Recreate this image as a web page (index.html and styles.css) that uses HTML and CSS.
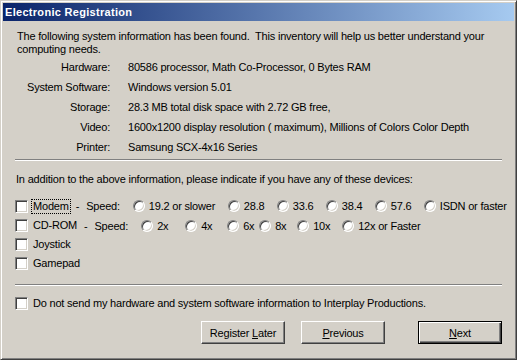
FILE: index.html
```html
<!DOCTYPE html>
<html lang="en">
<head>
  <meta charset="UTF-8">
  <title>Electronic Registration</title>
  <link rel="stylesheet" href="styles.css">
</head>
<body>
  <div class="window">
    <div class="titlebar">Electronic Registration</div>

    <div class="content">
      <p class="intro">The following system information has been found.&nbsp; This inventory will help us better understand your<br>computing needs.</p>

      <div class="info">
        <div class="info-row"><span class="info-label">Hardware:</span><span>80586 processor, Math Co-Processor, 0 Bytes RAM</span></div>
        <div class="info-row"><span class="info-label">System Software:</span><span>Windows version 5.01</span></div>
        <div class="info-row"><span class="info-label">Storage:</span><span>28.3 MB total disk space with 2.72 GB free,</span></div>
        <div class="info-row"><span class="info-label">Video:</span><span>1600x1200 display resolution ( maximum), Millions of Colors Color Depth</span></div>
        <div class="info-row"><span class="info-label">Printer:</span><span>Samsung SCX-4x16 Series</span></div>
      </div>

      <div class="separator"></div>

      <p class="prompt">In addition to the above information, please indicate if you have any of these devices:</p>

      <div class="devices">
        <div class="device-row modem">
          <span class="check"></span><span class="label focus">Modem</span>
          <span class="dash">-</span><span class="speed">Speed:</span>
          <span class="option slow"><span class="radio"></span>19.2 or slower</span>
          <span class="option"><span class="radio"></span>28.8</span>
          <span class="option"><span class="radio"></span>33.6</span>
          <span class="option"><span class="radio"></span>38.4</span>
          <span class="option"><span class="radio"></span>57.6</span>
          <span class="option last"><span class="radio"></span>ISDN or faster</span>
        </div>
        <div class="device-row cdrom">
          <span class="check"></span><span class="label">CD-ROM</span>
          <span class="dash">-</span><span class="speed">Speed:</span>
          <span class="option"><span class="radio"></span>2x</span>
          <span class="option"><span class="radio"></span>4x</span>
          <span class="option"><span class="radio"></span>6x</span>
          <span class="option"><span class="radio"></span>8x</span>
          <span class="option"><span class="radio"></span>10x</span>
          <span class="option last"><span class="radio"></span>12x or Faster</span>
        </div>
        <div class="device-row">
          <span class="check"></span><span class="label">Joystick</span>
        </div>
        <div class="device-row">
          <span class="check"></span><span class="label">Gamepad</span>
        </div>
      </div>

      <div class="separator lower"></div>

      <div class="device-row optout">
        <span class="check"></span><span class="label">Do not send my hardware and system software information to Interplay Productions.</span>
      </div>

      <div class="buttons">
        <button class="btn later">Register <u>L</u>ater</button>
        <button class="btn previous"><u>P</u>revious</button>
        <button class="btn default"><u>N</u>ext</button>
      </div>
    </div>
  </div>
</body>
</html>
```

FILE: styles.css
```css
body {
  margin: 0;
  background-color: #d4d0c8;
  font-family: 'Liberation Sans', Arial, sans-serif;
  font-size: 11px;
  letter-spacing: -0.2px;
  color: #000;
}

.window {
  width: 517px;
  height: 360px;
  box-sizing: border-box;
  border: 1px solid;
  border-color: #d4d0c8 #404040 #404040 #d4d0c8;
  box-shadow: inset 1px 1px #fff, inset -1px -1px #808080;
  padding: 2px;
  display: flex;
  flex-direction: column;
}

.titlebar {
  height: 18px;
  line-height: 18px;
  padding-left: 2px;
  background: linear-gradient(to right, #0a246a, #a6caf0);
  color: #fff;
  font-weight: bold;
  letter-spacing: 0.3px;
}

.content {
  padding: 9px 12px 0 12px;
}

p {
  margin: 0;
  line-height: 13px;
  white-space: nowrap;
}

.intro {
  padding-left: 2px;
}

.info {
  margin-top: 1px;
}

.info-row {
  display: flex;
  height: 20px;
  align-items: center;
  gap: 18px;
  white-space: nowrap;
}

.info-label {
  width: 95px;
  flex: none;
  text-align: right;
}

.separator {
  margin-top: 2px;
  height: 1px;
  border-top: 1px solid #808080;
  background-color: #fff;
}

.separator.lower {
  margin-top: 11px;
}

.prompt {
  margin-top: 12px;
  padding-left: 1px;
}

.devices {
  margin-top: 10px;
}

.device-row {
  display: flex;
  align-items: center;
  height: 19px;
  white-space: nowrap;
}

.device-row.modem {
  height: 20px;
}

.check {
  width: 13px;
  height: 13px;
  box-sizing: border-box;
  background-color: #fff;
  border: 1px solid;
  border-color: #808080 #fff #fff #808080;
  box-shadow: inset 1px 1px #404040, inset -1px -1px #d4d0c8;
  margin-right: 3px;
  flex: none;
}

.label {
  border: 1px dotted transparent;
  padding: 0 1px;
  line-height: 13px;
}

.label.focus {
  border-color: #000;
}

.dash {
  margin-left: 5px;
}

.speed {
  margin-left: 7px;
  margin-right: 13px;
}

.option {
  display: flex;
  align-items: center;
  flex: none;
}

.modem .option {
  width: 49px;
}

.modem .option.slow {
  width: 95px;
}

.cdrom .option:nth-child(5) { width: 44px; }
.cdrom .option:nth-child(6) { width: 42px; }
.cdrom .option:nth-child(7) { width: 32px; }
.cdrom .option:nth-child(8) { width: 38px; }
.cdrom .option:nth-child(9) { width: 45px; }

.option.last {
  width: auto;
}

.radio {
  width: 12px;
  height: 12px;
  box-sizing: border-box;
  border-radius: 50%;
  background-color: #fff;
  border: 1px solid;
  border-color: #808080 #fff #fff #808080;
  box-shadow: inset 1px 1px #404040, inset -1px -1px #d4d0c8;
  margin-right: 4px;
  flex: none;
}

.optout {
  margin-top: 8px;
}

.buttons {
  display: flex;
  justify-content: flex-end;
  margin-top: 8px;
}

.btn {
  width: 84px;
  height: 23px;
  padding: 0;
  background-color: #d4d0c8;
  font-family: inherit;
  font-size: 11px;
  letter-spacing: -0.2px;
  color: #000;
  border: 1px solid;
  border-color: #fff #404040 #404040 #fff;
  box-shadow: inset -1px -1px #808080;
}

.btn.previous {
  margin-left: 16px;
}

.btn.default {
  margin-left: 33px;
  border-color: #000;
  box-shadow: inset 1px 1px #fff, inset -1px -1px #404040, inset -2px -2px #808080;
}
```
